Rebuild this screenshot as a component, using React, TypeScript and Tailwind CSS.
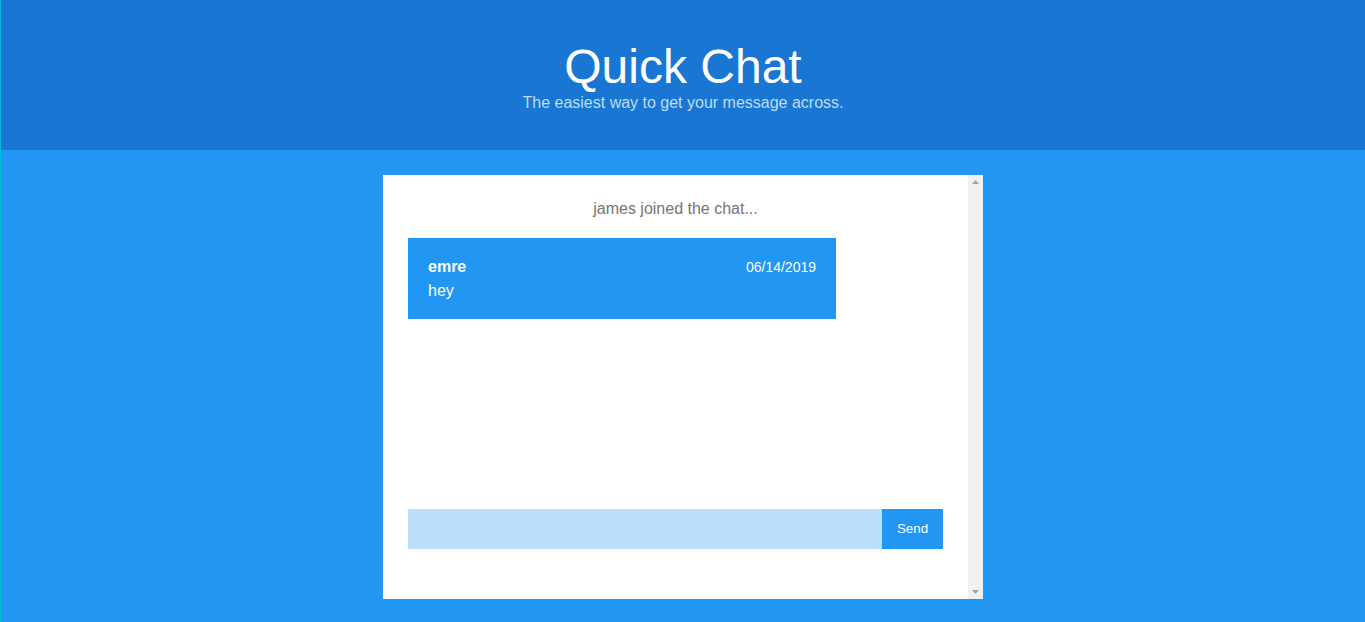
import React from "react";

export default function App() {
  return (
    <div
      className="min-h-[622px] border-l border-[#00bcd4] bg-[#2196f3] flex flex-col"
      style={{ fontFamily: '"Liberation Sans", Arial, sans-serif' }}
    >
      <header className="h-[150px] bg-[#1976d2] flex flex-col items-center pt-[43px]">
        <h1 className="text-[48px] leading-[48px] text-white font-normal">Quick Chat</h1>
        <p className="text-[16px] leading-[18px] text-[#bbdefb] mt-[3px]">
          The easiest way to get your message across.
        </p>
      </header>
      <main className="flex-1 flex justify-center pt-[25px]">
        <div className="w-[600px] h-[424px] bg-white flex">
          <div className="flex-1 p-[25px] flex flex-col">
            <div className="text-center text-[16px] leading-[18px] text-[#757575]">
              james joined the chat...
            </div>
            <div className="mt-[20px] w-[428px] bg-[#2196f3] text-white px-5 pt-[18px] pb-[17px]">
              <div className="flex items-baseline justify-between leading-[22px]">
                <span className="font-bold text-[16px]">emre</span>
                <span className="text-[14px]">06/14/2019</span>
              </div>
              <div className="text-[16px] leading-[22px] mt-[2px]">hey</div>
            </div>
            <div className="flex-1" />
            <form className="flex h-[40px] mb-[25px]" onSubmit={(e) => e.preventDefault()}>
              <input
                type="text"
                className="flex-1 h-full bg-[#bbdefb] outline-none border-0 px-3 text-[14px]"
              />
              <button
                type="submit"
                className="w-[61px] h-full bg-[#2196f3] text-white text-[13.33px]"
              >
                Send
              </button>
            </form>
          </div>
          <div className="w-[15px] bg-[#f1f1f1] flex flex-col items-center justify-between py-[5px]">
            <svg width="7" height="4" viewBox="0 0 7 4">
              <polygon points="3.5,0 7,4 0,4" fill="#a3a3a3" />
            </svg>
            <svg width="7" height="4" viewBox="0 0 7 4">
              <polygon points="0,0 7,0 3.5,4" fill="#a3a3a3" />
            </svg>
          </div>
        </div>
      </main>
    </div>
  );
}
